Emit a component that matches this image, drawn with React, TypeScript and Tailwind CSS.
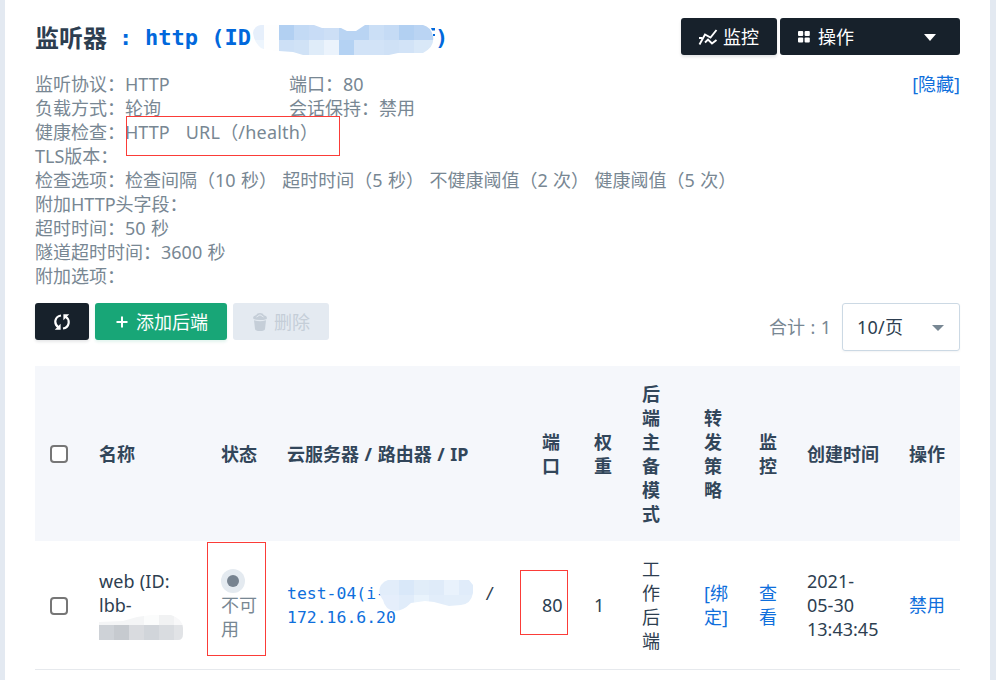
import React from "react";

const TH = "font-bold";
const GRID =
  "grid grid-cols-[49px_122px_66px_255px_52px_48px_62px_55px_48px_102px_51px] items-center pl-[15px]";
const MONO = "font-['DejaVu_Sans_Mono',monospace]";

type Block = [number, number, number, number, string];

function Mosaic({ id, w, h, shape, blocks, className }: { id: string; w: number; h: number; shape: string; blocks: Block[]; className: string }) {
  return (
    <svg className={className} width={w} height={h} viewBox={`0 0 ${w} ${h}`}>
      <clipPath id={id}>
        <path d={shape} />
      </clipPath>
      <g clipPath={`url(#${id})`} shapeRendering="crispEdges">
        {blocks.map(([x, y, bw, bh, c], i) => (
          <rect key={i} x={x} y={y} width={bw} height={bh} fill={c} />
        ))}
      </g>
    </svg>
  );
}

const titleBlocks: Block[] = [
  [0, 0, 11, 15, "#e6effb"], [0, 15, 11, 15, "#edf5fd"], [11, 0, 15, 30, "#fefefe"],
  [26, 0, 15, 15, "#b2d0f2"], [41, 0, 15, 15, "#c3daf5"], [56, 0, 15, 15, "#c8dcf6"], [71, 0, 15, 15, "#cddff6"],
  [86, 0, 30, 15, "#b9d4f3"], [116, 0, 15, 15, "#cbdff6"], [131, 0, 15, 15, "#c5dbf5"], [146, 0, 15, 15, "#b2d0f2"], [161, 0, 22, 15, "#bad4f3"],
  [26, 15, 15, 15, "#cde0f6"], [41, 15, 15, 15, "#d0e2f6"], [56, 15, 15, 15, "#dfecf9"], [71, 15, 15, 15, "#ebf3fc"],
  [86, 15, 15, 15, "#b4d2f3"], [101, 15, 30, 15, "#d2e3f7"], [131, 15, 15, 15, "#cfe1f6"], [146, 15, 15, 15, "#d2e3f7"], [161, 15, 22, 15, "#d9e8f8"],
];

const nameBlocks: Block[] = [
  [0, 0, 45, 10, "#f4f5f6"], [45, 0, 15, 10, "#fbfcfc"], [60, 0, 15, 10, "#f1f2f3"], [75, 0, 9, 10, "#f8f8f9"],
  [0, 10, 15, 15, "#ced2d7"], [15, 10, 15, 15, "#c6cacf"], [30, 10, 15, 15, "#d9dbdf"], [45, 10, 15, 15, "#d1d5da"],
  [60, 10, 15, 15, "#d9dce0"], [75, 10, 9, 15, "#e1e3e6"],
];

const hostBlocks: Block[] = [
  [0, 0, 20, 15, "#e2edfa"], [20, 0, 15, 15, "#d9e8f9"], [35, 0, 15, 15, "#e1edf9"], [50, 0, 15, 15, "#dfebf9"], [65, 0, 15, 15, "#e9f2fc"], [80, 0, 14, 15, "#e0ecfa"],
  [0, 15, 20, 16, "#e5eefb"], [20, 15, 15, 16, "#e0ecfa"], [35, 15, 15, 16, "#e9f3fc"], [50, 15, 15, 16, "#e2edfa"], [65, 15, 29, 16, "#e3eefa"],
];

function Checkbox() {
  return <div className="mt-px h-[18px] w-[18px] rounded-[4px] border-2 border-[#767676] bg-white" />;
}

export default function App() {
  return (
    <div className="h-[680px] w-[996px] overflow-hidden border-r-[6px] border-l-[5px] border-[#e3e9f1] bg-white pr-[30px] pl-[30px] font-['Noto_Sans','Noto_Sans_CJK_SC',sans-serif] text-[18px] leading-[24px] text-[#2d3e50]">
      <header className="flex h-[72px] items-start justify-between pt-[18px]">
        <h1 className="relative flex h-[40px] items-center text-[24px] font-bold">
          <span className="w-[84px]">监听器</span>
          <span className={`${MONO} flex whitespace-pre text-[22px] text-[#0168dc]`}>
            <span className="w-[26px]">:</span>
            <span className="w-[290px]">http (ID</span>
            <span>)</span>
          </span>
          <Mosaic
            id="title-mask"
            className="absolute top-[7px] left-[218px]"
            w={183}
            h={30}
            shape="M8 0H61L69 3H88L94 6H103L112 0H170Q178 2 180 11Q182 22 170 28H145L136 30H50L40 27L26 26Q12 25 8 23Q1 17 0 8Q1 1 8 0Z"
            blocks={titleBlocks}
          />
          <svg className="absolute top-[10px] left-[395px]" width="5" height="9" viewBox="0 0 5 9" fill="#0168dc">
            <path d="M1 0H5V2.5H2ZM3 6H5V8H3Z" />
          </svg>
        </h1>
        <div className="flex gap-[3px] text-white">
          <button className="flex h-[37px] w-[96px] items-center rounded-[3px] bg-[#17212b] pl-[17px] shadow-[0_2px_3px_rgba(23,33,43,0.12)]">
            <svg className="mr-[5px]" width="20" height="18" viewBox="0 0 20 18" fill="none" stroke="currentColor" strokeWidth="1.9">
              <path d="M1.5 16.5L7 6.5L12.5 9.5L18.5 2" />
              <path d="M1 10H4.5M7 14.5L10 11.5L14 15.5L18.5 12" />
            </svg>
            监控
          </button>
          <button className="flex h-[37px] w-[180px] items-center rounded-[3px] bg-[#17212b] pl-[18px]">
            <svg width="12" height="12" viewBox="0 0 12 12" fill="currentColor">
              <rect width="5.2" height="5" rx="1" />
              <rect x="6.6" width="5.2" height="5" rx="1" />
              <rect y="6.6" width="5.2" height="5" rx="1" />
              <rect x="6.6" y="6.6" width="5.2" height="5" rx="1" />
            </svg>
            <span className="ml-[8px] flex-1 text-left">操作</span>
            <svg className="mt-[2px] mr-[24px]" width="12" height="7" viewBox="0 0 12 7" fill="currentColor">
              <path d="M0 0H12L6 7Z" />
            </svg>
          </button>
        </div>
      </header>

      <section className="relative whitespace-pre text-[#788793] [word-spacing:0.7px]">
        <div className="flex">
          <span className="w-[254px]">监听协议：HTTP</span>
          <span className="flex-1">端口：80</span>
          <a className="text-[#0f6fdc]">[隐藏]</a>
        </div>
        <div className="flex">
          <span className="w-[254px]">负载方式：轮询</span>
          <span>会话保持：禁用</span>
        </div>
        <div>
          健康检查：HTTP   <span className="tracking-[0.2px]">URL（/health）</span>
        </div>
        <div>TLS版本：</div>
        <div>检查选项：检查间隔（10 秒） 超时时间（5 秒） 不健康阈值（2 次） 健康阈值（5 次）</div>
        <div>附加HTTP头字段：</div>
        <div>超时时间：50 秒</div>
        <div>隧道超时时间：3600 秒</div>
        <div>附加选项：</div>
        <div className="absolute top-[44px] left-[91px] h-[40px] w-[214px] border border-[#fb3c38]" />
      </section>

      <div className="flex h-[78px] items-start pt-[15px]">
        <button className="flex h-[37px] w-[54px] items-center justify-center rounded-[3px] bg-[#17212b] text-white shadow-[0_2px_3px_rgba(23,33,43,0.1)]">
          <svg width="16" height="16" viewBox="0 0 16 16" fill="none" stroke="currentColor" strokeWidth="2.2">
            <path d="M7 1.5C0.5 2.5 -0.5 10 4.5 13.3" />
            <path d="M9 14.5C15.5 13.5 16.5 6 11.5 2.7" />
            <path d="M6.6 9.8V15.7H0.8Z" fill="currentColor" stroke="none" />
            <path d="M9.4 6.2V0.3H15.2Z" fill="currentColor" stroke="none" />
          </svg>
        </button>
        <button className="ml-[6px] flex h-[37px] w-[132px] items-center rounded-[3px] bg-[#18a677] pl-[21px] text-white shadow-[0_2px_3px_rgba(24,166,119,0.12)]">
          <svg className="mr-[8px]" width="12" height="12" viewBox="0 0 12 12" stroke="currentColor" strokeWidth="2">
            <path d="M6 0.5V11.5M0.5 6H11.5" />
          </svg>
          添加后端
        </button>
        <button className="ml-[6px] flex h-[37px] w-[96px] items-center rounded-[3px] bg-[#e4eaf1] pl-[19px] text-[#c5ced8]">
          <svg className="mr-[6px]" width="16" height="18" viewBox="0 0 16 18" fill="currentColor">
            <path d="M1 5Q1 3 4 2.3Q5 0 8 0Q11 0 12 2.3Q15 3 15 5Q15 7 8 7Q1 7 1 5Z" />
            <path d="M2 7.3Q8 9.3 14 7.3L13 16Q12.6 18 8 18Q3.4 18 3 16Z" />
            <path d="M4.5 4L8 1.8L11.5 4" fill="none" stroke="#e4eaf1" />
          </svg>
          删除
        </button>
        <span className="mt-[12px] ml-auto text-[#788793] [word-spacing:0.7px]">合计 : 1</span>
        <div className="ml-[11px] flex h-[48px] w-[118px] items-center rounded-[3px] border border-[#ccd9e4] pl-[14px] shadow-[0_1px_2px_rgba(45,62,80,0.06)]">
          <span className="flex-1 tracking-[0.2px]">10/页</span>
          <svg className="mt-[2px] mr-[15px] text-[#788793]" width="12" height="6" viewBox="0 0 12 6" fill="currentColor">
            <path d="M0 0H12L6 6Z" />
          </svg>
        </div>
      </div>

      <div className={`${GRID} h-[175px] bg-[#f5f7fb] text-[#32465a]`}>
        <Checkbox />
        <div className={TH}>名称</div>
        <div className={TH}>状态</div>
        <div className="font-bold [word-spacing:0.9px]">云服务器 / 路由器 / IP</div>
        <div className="w-[18px] font-bold">端口</div>
        <div className="w-[18px] font-bold">权重</div>
        <div className="w-[18px] font-bold">后端主备模式</div>
        <div className="w-[18px] font-bold">转发策略</div>
        <div className="w-[18px] font-bold">监控</div>
        <div className={TH}>创建时间</div>
        <div className={TH}>操作</div>
      </div>

      <div className={`${GRID} h-[129px] border-b border-[#e6e9ed]`}>
        <Checkbox />
        <div className="relative h-[72px]">
          <div className="tracking-[0.15px]">web (ID:</div>
          <div>lbb-</div>
          <Mosaic
            id="name-mask"
            className="absolute top-[46px] left-0"
            w={84}
            h={25}
            shape="M0 7L24 6L38 2L52 0H72Q84 4 84 13V19Q84 25 79 25H0Z"
            blocks={nameBlocks}
          />
        </div>
        <div className="relative w-[40px]">
          <div className="flex h-6 w-6 items-center justify-center rounded-full bg-[#e4eaf0]">
            <div className="h-3 w-3 rounded-full bg-[#778390]" />
          </div>
          <div className="text-[#788793]">不可<br />用</div>
          <div className="absolute -top-[27px] -left-[14px] h-[114px] w-[59px] border border-[#fb3c38]" />
        </div>
        <div className={`${MONO} relative h-[50px] pt-[2px] text-[16.45px]`}>
          <div className="whitespace-pre text-[#0f6fdc]">test-04(i-       ) <span className="ml-[10px] text-[#2d3e50]">/</span></div>
          <div className="text-[#0f6fdc]">172.16.6.20</div>
          <Mosaic
            id="host-mask"
            className="absolute top-0 left-[92px]"
            w={94}
            h={31}
            shape="M9 0H90L94 5V13Q92 24 82 25L70 26L55 22L46 21L32 23Q24 31 16 31Q6 30 4 20Q-2 12 2 5Q5 1 9 0Z"
            blocks={hostBlocks}
          />
        </div>
        <div className="relative">
          80
          <div className="absolute -top-[23px] -left-[22px] h-[65px] w-[48px] border border-[#fb3c38]" />
        </div>
        <div>1</div>
        <div className="w-[18px]">工作后端</div>
        <div className="w-[25px] text-[#0f6fdc]">[绑<br />定]</div>
        <div className="w-[18px] text-[#0f6fdc]">查看</div>
        <div>2021-<br />05-30<br />13:43:45</div>
        <div className="text-[#0f6fdc]">禁用</div>
      </div>
    </div>
  );
}
